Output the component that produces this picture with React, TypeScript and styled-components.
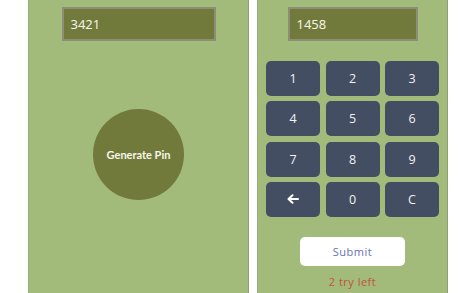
import styled, { createGlobalStyle } from 'styled-components';

const GlobalStyle = createGlobalStyle`
  html, body {
    margin: 0;
    padding: 0;
    background: #ffffff;
    font-family: "Noto Sans", "Open Sans", sans-serif;
  }
`;

const Page = styled.div`
  display: flex;
  gap: 8px;
  padding-left: 28px;
  height: 293px;
`;

const Panel = styled.div<{ $width: number }>`
  width: ${(p) => p.$width}px;
  height: 100%;
  background: #a2ba7a;
  display: flex;
  flex-direction: column;
  align-items: center;
  box-sizing: border-box;
  padding-top: 7px;
  border-right: 1px solid #8f9e78;
  border-left: 1px solid #9aae7c;
`;

const Display = styled.div<{ $width: number }>`
  width: ${(p) => p.$width}px;
  height: 34px;
  box-sizing: border-box;
  background: #717a3b;
  border: 2px solid #8c8f78;
  color: #f3f3e6;
  font-size: 13px;
  display: flex;
  align-items: center;
  padding-left: 7px;
`;

const GenerateButton = styled.button`
  margin-top: 68px;
  width: 91px;
  height: 91px;
  border-radius: 50%;
  border: none;
  background: #717a3b;
  color: #f6f6ea;
  font-family: Lato, "Noto Sans", sans-serif;
  font-weight: 700;
  font-size: 11px;
  padding: 0;
`;

const Keypad = styled.div`
  margin-top: 20px;
  display: grid;
  grid-template-columns: repeat(3, 54px);
  grid-auto-rows: 35px;
  column-gap: 5.5px;
  row-gap: 5.3px;
`;

const Key = styled.button`
  border: none;
  border-radius: 5px;
  background: #434e62;
  color: #f2f2f2;
  font-family: "Open Sans", "Noto Sans", sans-serif;
  font-size: 12.5px;
  display: flex;
  align-items: center;
  justify-content: center;
  padding: 0;
`;

const SubmitButton = styled.button`
  margin-top: 20px;
  width: 105px;
  height: 29px;
  border: none;
  border-radius: 5px;
  background: #ffffff;
  color: #6a6fb0;
  font-family: "Open Sans", "Noto Sans", sans-serif;
  font-size: 11px;
  letter-spacing: 0.5px;
  padding: 0;
`;

const Tries = styled.div`
  margin-top: 8px;
  color: #c3553b;
  font-family: "Open Sans", "Noto Sans", sans-serif;
  font-size: 11px;
  letter-spacing: 0.5px;
`;

const keys = ['1', '2', '3', '4', '5', '6', '7', '8', '9', '←', '0', 'C'];

export default function App() {
  return (
    <>
      <GlobalStyle />
      <Page>
        <Panel $width={221}>
          <Display $width={154}>3421</Display>
          <GenerateButton>Generate Pin</GenerateButton>
        </Panel>
        <Panel $width={191}>
          <Display $width={130}>1458</Display>
          <Keypad>
            {keys.map((k) => (
              <Key key={k}>
                {k === '←' ? (
                  <svg width="12" height="10" viewBox="0 0 12 10">
                    <path
                      d="M11 5H2M5.5 1.2L1.5 5l4 3.8"
                      stroke="#ffffff"
                      strokeWidth="2"
                      fill="none"
                      strokeLinecap="round"
                      strokeLinejoin="round"
                    />
                  </svg>
                ) : (
                  k
                )}
              </Key>
            ))}
          </Keypad>
          <SubmitButton>Submit</SubmitButton>
          <Tries>2 try left</Tries>
        </Panel>
      </Page>
    </>
  );
}
